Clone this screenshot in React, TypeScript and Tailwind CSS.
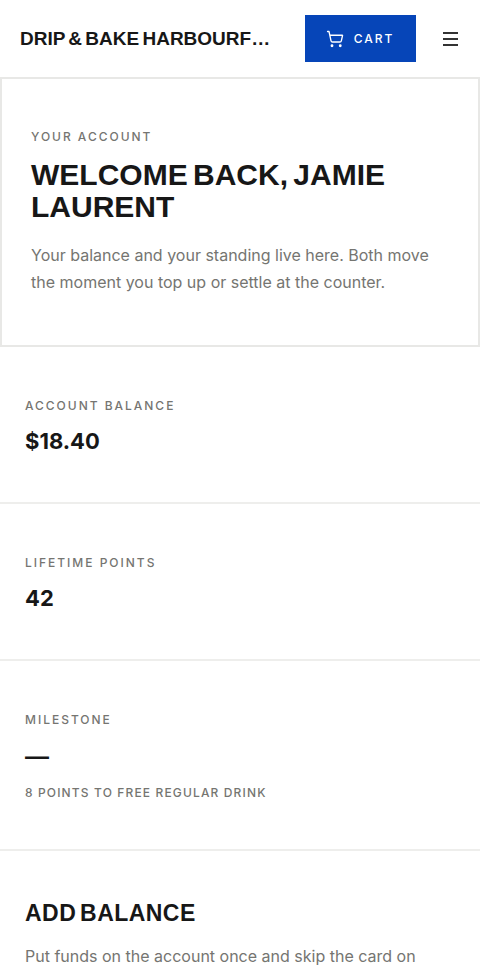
import React from "react";

const heading = "font-['Liberation_Sans',sans-serif]";
const label = "text-[12px] leading-[16px] font-medium tracking-[0.165em] text-[#757571]";

function Cart() {
  return (
    <svg width="18" height="18" viewBox="0 0 24 24" fill="none" stroke="currentColor" strokeWidth="1.8" strokeLinecap="round" strokeLinejoin="round">
      <circle cx="8" cy="21" r="1" />
      <circle cx="19" cy="21" r="1" />
      <path d="M2.05 2.05h2l2.66 12.42a2 2 0 0 0 2 1.58h9.78a2 2 0 0 0 1.95-1.57l1.65-7.43H5.12" />
    </svg>
  );
}

function Stat({ name, value, h }: { name: string; value: string; h: string }) {
  return (
    <section className={`border-b-2 border-[#eeeeec] px-[25px] pt-[51px] ${h}`}>
      <div className={label}>{name}</div>
      <div className="mt-[13px] text-[22px] leading-[28px] font-bold text-[#171717]">{value}</div>
    </section>
  );
}

export default function App() {
  return (
    <div className="h-[972px] w-[480px] overflow-hidden bg-white font-['Inter',sans-serif]">
      <header className="flex h-[77px] items-center pl-[20px] pr-[20px]">
        <div className={`${heading} w-[256px] text-[19px] leading-[28px] font-bold [word-spacing:-2px] whitespace-nowrap text-[#171717]`}>
          DRIP &amp; BAKE HARBOURF…
        </div>
        <button className="ml-[29px] flex h-[47px] w-[111px] items-center justify-center gap-[10px] bg-[#0645b8] text-[12px] font-medium tracking-[0.16em] text-white">
          <span className="-ml-[1px]"><Cart /></span>
          CART
        </button>
        <div className="ml-[27px] flex w-[15px] flex-col gap-[4px]">
          <span className="h-[2px] w-full bg-[#333333]" />
          <span className="h-[2px] w-full bg-[#333333]" />
          <span className="h-[2px] w-full bg-[#333333]" />
        </div>
      </header>

      <section className="h-[270px] border-2 border-[#e8e8e6] px-[29px] pt-[50px]">
        <div className={label}>YOUR ACCOUNT</div>
        <h1 className={`${heading} mt-[14px] text-[30px] leading-[32px] font-bold [word-spacing:-3px] text-[#171717]`}>
          WELCOME BACK, JAMIE LAURENT
        </h1>
        <p className="mt-[19px] text-[16px] leading-[27px] text-[#757571]">
          Your balance and your standing live here. Both move the moment you top up or settle at the counter.
        </p>
      </section>

      <Stat name="ACCOUNT BALANCE" value="$18.40" h="h-[157px]" />
      <Stat name="LIFETIME POINTS" value="42" h="h-[157px]" />

      <section className="h-[190px] border-b-2 border-[#eeeeec] px-[25px] pt-[51px]">
        <div className={label}>MILESTONE</div>
        <div className="mt-[15px] text-[24px] leading-[28px] font-semibold text-[#171717]">—</div>
        <div className="mt-[14px] text-[12px] leading-[16px] font-medium tracking-[0.095em] text-[#757571]">8 POINTS TO FREE REGULAR DRINK</div>
      </section>

      <section className="px-[25px] pt-[46px]">
        <h2 className={`${heading} text-[23px] leading-[32px] font-bold tracking-[0.02em] [word-spacing:-3px] text-[#171717]`}>ADD BALANCE</h2>
        <p className="mt-[14px] text-[16px] leading-[27px] text-[#757571]">
          Put funds on the account once and skip the card on every visit after that.
        </p>
      </section>
    </div>
  );
}
